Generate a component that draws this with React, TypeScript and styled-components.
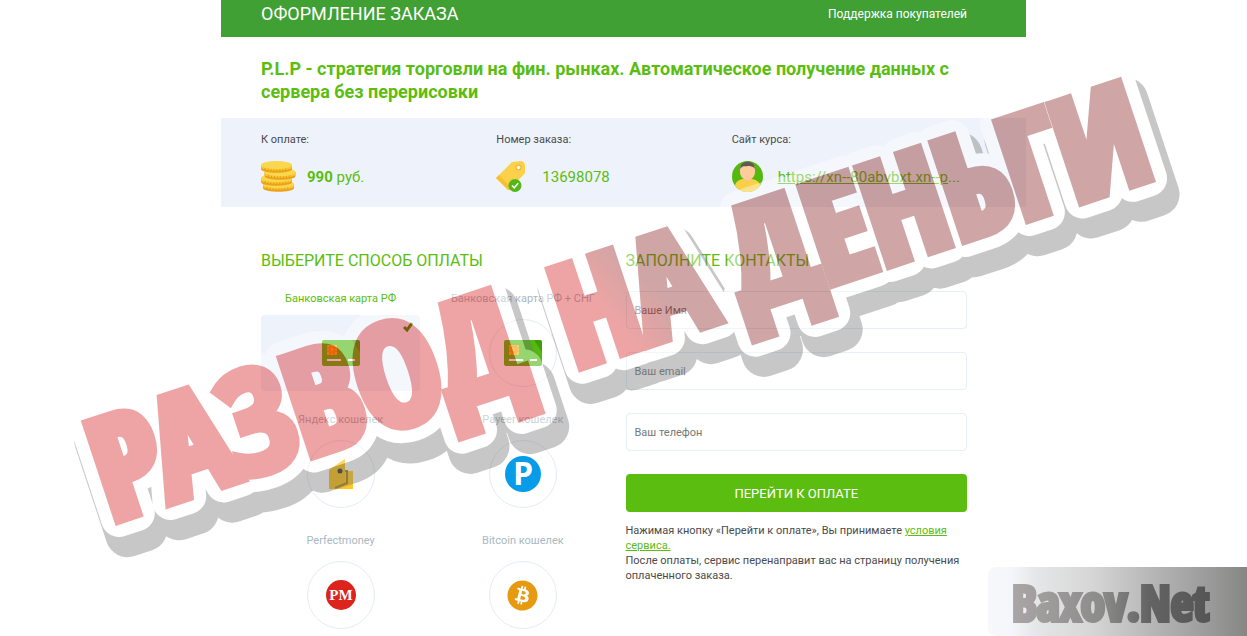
import React from "react";
import styled, { createGlobalStyle } from "styled-components";
import { FaBitcoin } from "react-icons/fa";

const GlobalStyle = createGlobalStyle`
  * { box-sizing: border-box; }
  body {
    margin: 0;
    background: #fff;
    color: #4a4a4a;
    font-family: Roboto, "Liberation Sans", sans-serif;
    font-size: 11px;
  }
`;

const Page = styled.div`
  position: relative;
  min-height: 100vh;
  overflow: hidden;
`;

const Sheet = styled.main`
  max-width: 805px;
  margin: 0 auto;
`;

const Header = styled.header`
  display: flex;
  align-items: flex-start;
  justify-content: space-between;
  height: 37px;
  padding: 3px 59px 0 40px;
  background: #40a033;
  color: #fff;
`;

const HeaderTitle = styled.span`
  font-size: 18px;
  line-height: 22px;
`;

const SupportLink = styled.a`
  color: #fff;
  font-size: 12px;
  line-height: 22px;
  text-decoration: none;
`;

const ProductTitle = styled.h1`
  margin: 0;
  padding: 20px 59px 15px 40px;
  color: #5bbd10;
  font-size: 18px;
  font-weight: 700;
  line-height: 23px;
`;

const Summary = styled.section`
  display: grid;
  grid-template-columns: repeat(3, 1fr);
  padding: 14px 59px 15px 40px;
  background: #eef3fb;
`;

const SummaryLabel = styled.div`
  line-height: 16px;
  margin-bottom: 13px;
`;

const SummaryValue = styled.div`
  display: flex;
  align-items: center;
  height: 31px;
  color: #5bbd10;
  font-size: 15px;
  white-space: nowrap;
`;

const IconSlot = styled.span`
  display: flex;
  flex: 0 0 46px;
`;

const GreenLink = styled.a`
  color: #5bbd10;
  text-decoration: underline;
`;

const Columns = styled.div`
  display: grid;
  grid-template-columns: 1fr 1fr;
  gap: 23px;
  padding: 43px 59px 0 40px;
`;

const SectionTitle = styled.h2`
  margin: 0 0 19px;
  color: #5bbd10;
  font-size: 16px;
  font-weight: 400;
  line-height: 22px;
`;

const Methods = styled.div`
  display: grid;
  grid-template-columns: 1fr 1fr;
  gap: 21px 23px;
`;

const Method = styled.label`
  display: flex;
  flex-direction: column;
  align-items: center;
  gap: 8px;
  color: #a9b8c2;
  line-height: 16px;
  white-space: nowrap;
  cursor: pointer;
  &:has(input:checked) { color: #5bbd10; }
`;

const MethodRadio = styled.input`
  position: absolute;
  opacity: 0;
  pointer-events: none;
`;

const MethodBox = styled.span`
  position: relative;
  display: flex;
  align-items: center;
  justify-content: center;
  width: 100%;
  height: 76px;
  border-radius: 4px;
  ${MethodRadio}:checked + & { background: #eef3fb; }
`;

const Ring = styled.span`
  display: flex;
  align-items: center;
  justify-content: center;
  width: 68px;
  height: 68px;
  border: 1px solid #e4ecf7;
  border-radius: 50%;
  ${MethodRadio}:checked + ${MethodBox} > & { border-color: transparent; }
`;

const Tick = styled.svg`
  position: absolute;
  top: 7px;
  right: 7px;
  display: none;
  ${MethodRadio}:checked + ${MethodBox} > & { display: block; }
`;

const Form = styled.form`
  display: flex;
  flex-direction: column;
`;

const Field = styled.input`
  width: 100%;
  height: 38px;
  margin-bottom: 23px;
  padding: 0 8px;
  border: 1px solid #e6eef9;
  border-radius: 4px;
  background: #fff;
  color: #4a4a4a;
  font: 11px Roboto, "Liberation Sans", sans-serif;
  outline: none;
  &::placeholder { color: #777; opacity: 1; }
`;

const PayButton = styled.button`
  height: 38px;
  border: 0;
  border-radius: 4px;
  background: #5bbd10;
  color: #fff;
  font: 13px Roboto, "Liberation Sans", sans-serif;
  cursor: pointer;
`;

const Terms = styled.p`
  margin: 11px 0 0;
  line-height: 15px;
`;

const Stamp = styled.svg`
  position: absolute;
  top: 0;
  left: 0;
  width: 100%;
  opacity: 0.4;
  pointer-events: none;
  font-family: "Open Sans Condensed", "Roboto Condensed", "Open Sans", sans-serif;
  font-weight: 700;
  font-size: 140px;
`;

const Watermark = styled.div`
  position: absolute;
  right: 0;
  bottom: 0;
  width: 259px;
  height: 69px;
  border-radius: 8px 0 0 8px;
  background: linear-gradient(90deg, #f7f7fc 0, #f5f6fb 9%, #e6e7e8 18%, #d6d6d6 40%, #b4b4b4 65%, #979797 88%, #868683 100%);
`;

const WatermarkText = styled.svg`
  display: block;
  font-family: "Open Sans Condensed", "Roboto Condensed", "Open Sans", sans-serif;
  font-weight: 700;
  font-size: 49px;
`;

const CoinsIcon = () => (
  <svg width="35" height="31" viewBox="0 0 35 31" aria-hidden="true">
    {[
      [17.5, 23],
      [15.5, 17],
      [19, 11],
      [15.5, 4],
    ].map(([cx, cy]) => (
      <g key={cy}>
        <path d={`M${cx - 15.5} ${cy}v4c0 5 31 5 31 0v-4z`} fill="#eda21b" />
        <path d={`M${cx - 15.5} ${cy}v2c0 5 31 5 31 0v-2z`} fill="#fbc62f" />
        <ellipse cx={cx} cy={cy} rx="15.5" ry="4" fill="#f9d84f" />
        <path d={`M${cx - 12} ${cy + 4}q12 3 24 0`} fill="none" stroke="#dc9a1c" strokeWidth="2" strokeDasharray="1 2" />
      </g>
    ))}
  </svg>
);

const TagIcon = () => (
  <svg width="30" height="31" viewBox="0 0 30 31" aria-hidden="true">
    <path d="M16 1 25 0q3 0 4 4v8L14 28q-1 1-2 0L0 17z" fill="#fbd04a" />
    <path d="m0 17 3-3 13 14-2 1h-2z" fill="#f9bf2e" />
    <circle cx="22.500" cy="6.500" r="2.500" fill="#fff6dc" stroke="#eda71d" />
    <circle cx="19" cy="24.500" r="6.500" fill="#52b818" />
    <path d="m16 24.500 2.200 2.300 4-4.600" fill="none" stroke="#fff" strokeWidth="1.500" />
  </svg>
);

const UserIcon = () => (
  <svg width="31" height="31" viewBox="0 0 31 31" aria-hidden="true">
    <clipPath id="face">
      <circle cx="15.500" cy="15.500" r="15.500" />
    </clipPath>
    <g clipPath="url(#face)">
      <path d="M0 0h31v31H0z" fill="#54b90f" />
      <path d="M2 31c0-9 3-12 9-13h9c6 1 9 4 9 13z" fill="#fbd044" />
      <path d="M12 14h7v5q-3.500 4-7 0z" fill="#f8c08e" />
      <path d="M8 5h15v6c0 4-3 8-7.500 8S8 15 8 11z" fill="#fecb9a" />
      <path d="M8 8c0-9 15-10 15 0-2-3-5-3-7-3-3 1-5-1-8 3z" fill="#5f5759" />
    </g>
  </svg>
);

const CardIcon = () => (
  <svg width="38" height="26" viewBox="0 0 38 26" aria-hidden="true">
    <rect width="38" height="26" rx="2" fill="#52b910" />
    <path d="M35 0q3 0 3 3v9L30 0z" fill="#3f9c0c" />
    <rect x="5" y="5" width="10" height="10" rx="1" fill="#ffb400" />
    <path d="M5 8h3v3H5m10-3h-3v3h3M8 5v2h4V5M8 15v-3h4v3" fill="none" stroke="#e87a00" />
    <path d="M5 20h14m7 0h7" stroke="#fff" strokeWidth="2" />
  </svg>
);

const YandexIcon = () => (
  <svg width="24" height="30" viewBox="0 0 24 30" aria-hidden="true">
    <path d="M0 11 16 0v12h8v18H0z" fill="#ffc91f" />
    <path d="M0 11 16 0v23L3 30H0z" fill="#f7bd0c" />
    <path d="M16 12h2v12L6 29" fill="none" stroke="#a97d08" strokeWidth="2" />
    <circle cx="11" cy="12" r="2.500" fill="#333" />
  </svg>
);

const PayeerIcon = () => (
  <svg width="36" height="36" viewBox="0 0 36 36" overflow="visible" aria-hidden="true">
    <circle cx="18" cy="18" r="18" fill="#079ce8" />
    <text x="18" y="29" textAnchor="middle" fill="#fff" fontFamily="Open Sans" fontSize="32" fontWeight="700">P</text>
  </svg>
);

const PerfectIcon = () => (
  <svg width="30" height="30" viewBox="0 0 30 30" aria-hidden="true">
    <circle cx="15" cy="15" r="15" fill="#dc231c" />
    <text x="15" y="20" textAnchor="middle" fill="#fff" fontFamily="Liberation Serif" fontSize="15" fontWeight="700">PM</text>
  </svg>
);

const methods = [
  { name: "Банковская карта РФ", icon: <CardIcon /> },
  { name: "Банковская карта РФ + СНГ", icon: <CardIcon /> },
  { name: "Яндекс кошелек", icon: <YandexIcon /> },
  { name: "Payeer кошелек", icon: <PayeerIcon /> },
  { name: "Perfectmoney", icon: <PerfectIcon /> },
  { name: "Bitcoin кошелек", icon: <FaBitcoin size={31} color="#e69a12" /> },
];

export default function App() {
  return (
    <Page>
      <GlobalStyle />
      <Sheet>
        <Header>
          <HeaderTitle>ОФОРМЛЕНИЕ ЗАКАЗА</HeaderTitle>
          <SupportLink href="#support">Поддержка покупателей</SupportLink>
        </Header>
        <ProductTitle>
          P.L.P - стратегия торговли на фин. рынках. Автоматическое получение данных с сервера без перерисовки
        </ProductTitle>
        <Summary>
          <div>
            <SummaryLabel>К оплате:</SummaryLabel>
            <SummaryValue>
              <IconSlot><CoinsIcon /></IconSlot>
              <span><b>990</b> руб.</span>
            </SummaryValue>
          </div>
          <div>
            <SummaryLabel>Номер заказа:</SummaryLabel>
            <SummaryValue>
              <IconSlot><TagIcon /></IconSlot>
              <span>13698078</span>
            </SummaryValue>
          </div>
          <div>
            <SummaryLabel>Сайт курса:</SummaryLabel>
            <SummaryValue>
              <IconSlot><UserIcon /></IconSlot>
              <span><GreenLink href="#course">https://xn--80abvbxt.xn--p</GreenLink>...</span>
            </SummaryValue>
          </div>
        </Summary>
        <Columns>
          <section>
            <SectionTitle>ВЫБЕРИТЕ СПОСОБ ОПЛАТЫ</SectionTitle>
            <Methods>
              {methods.map((m, i) => (
                <Method key={m.name}>
                  {m.name}
                  <MethodRadio type="radio" name="method" defaultChecked={i === 0} />
                  <MethodBox>
                    <Ring>{m.icon}</Ring>
                    <Tick width="10" height="10" viewBox="0 0 10 10">
                      <path d="m1 5 3 3 5-7" fill="none" stroke="#2f8a00" strokeWidth="3" />
                    </Tick>
                  </MethodBox>
                </Method>
              ))}
            </Methods>
          </section>
          <Form onSubmit={(e) => e.preventDefault()}>
            <SectionTitle>ЗАПОЛНИТЕ КОНТАКТЫ</SectionTitle>
            <Field type="text" placeholder="Ваше Имя" aria-label="Ваше Имя" />
            <Field type="email" placeholder="Ваш email" aria-label="Ваш email" />
            <Field type="tel" placeholder="Ваш телефон" aria-label="Ваш телефон" />
            <PayButton type="submit">ПЕРЕЙТИ К ОПЛАТЕ</PayButton>
            <Terms>
              Нажимая кнопку «Перейти к оплате», Вы принимаете <GreenLink href="#terms">условия сервиса.</GreenLink>
              <br />
              После оплаты, сервис перенаправит вас на страницу получения оплаченного заказа.
            </Terms>
          </Form>
        </Columns>
      </Sheet>

      <Stamp viewBox="0 0 1247 636">
        <defs>
          <linearGradient id="ink" gradientUnits="userSpaceOnUse" x1="523" y1="-64" x2="573" y2="-86">
            <stop offset="0" stopColor="#d71e1e" />
            <stop offset="1" stopColor="#8a2020" />
          </linearGradient>
          <g id="stamp-words">
            <text x="-5" y="-5">РАЗВОД</text>
            <text x="483" y="-5">НА</text>
            <text x="664" y="-5">ДЕНЬГИ</text>
          </g>
        </defs>
        <g transform="translate(117 525) rotate(-18.300)" strokeLinejoin="round">
          <use href="#stamp-words" x="3" y="18" fill="#757575" stroke="#757575" strokeWidth="44" />
          <use href="#stamp-words" fill="#fff" stroke="#fff" strokeWidth="36" />
          <use href="#stamp-words" fill="url(#ink)" stroke="url(#ink)" strokeWidth="11" strokeLinejoin="miter" />
        </g>
      </Stamp>

      <Watermark>
        <WatermarkText width="259" height="69" viewBox="0 0 259 69">
          <defs>
            <linearGradient id="mark" x1="0" x2="1">
              <stop offset="0" stopColor="#aaa5a6" />
              <stop offset="0.450" stopColor="#8c8c8b" />
              <stop offset="0.700" stopColor="#636363" />
              <stop offset="1" stopColor="#555" />
            </linearGradient>
          </defs>
          <text x="24" y="54" fill="url(#mark)" stroke="url(#mark)" strokeWidth="4">Baxov.Net</text>
        </WatermarkText>
      </Watermark>
    </Page>
  );
}
